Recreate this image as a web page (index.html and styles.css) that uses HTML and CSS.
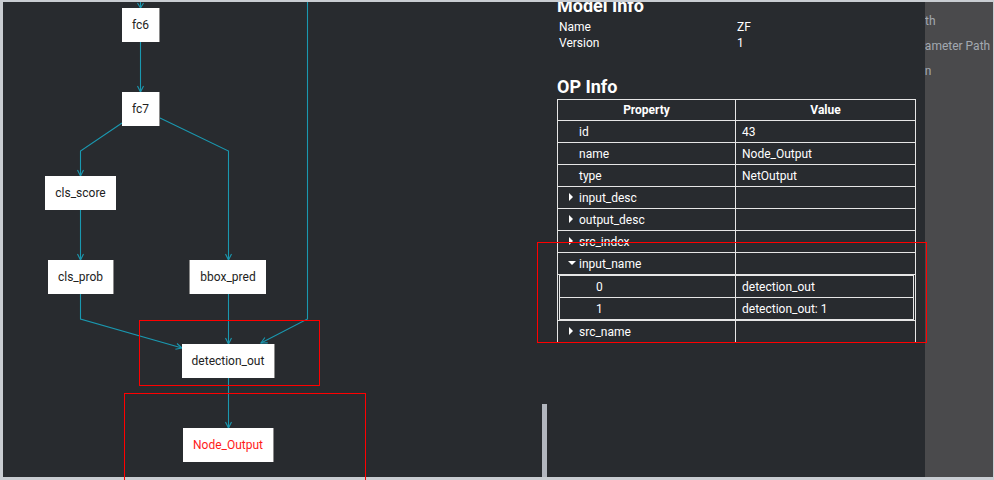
FILE: index.html
```html
<!DOCTYPE html>
<html>
<head>
<meta charset="utf-8">
<link rel="stylesheet" href="styles.css">
</head>
<body>
<div class="app">
  <div class="main">
    <div class="graph">
      <div class="canvas">
        <svg class="edges" width="994" height="480" viewBox="0 0 994 480">
          <g fill="none" stroke="#1a98b0" stroke-width="1.1">
            <path d="M140.5 0 V8"/>
            <path d="M137.5 3 L140.5 8 L143.5 3"/>
            <path d="M140.5 42 V92"/>
            <path d="M137.5 86 L140.5 92 L143.5 86"/>
            <path d="M122 123 L80.5 151 V176"/>
            <path d="M77.5 170 L80.5 176 L83.5 170"/>
            <path d="M160 118 L228.5 151 V260"/>
            <path d="M225.5 254 L228.5 260 L231.5 254"/>
            <path d="M307.5 0 V319 L261 343"/>
            <path d="M267.7 342.9 L261 343 L264.9 337.5"/>
            <path d="M80.5 210 V260"/>
            <path d="M77.5 254 L80.5 260 L83.5 254"/>
            <path d="M80.5 294 V319 L182 348"/>
            <path d="M175.4 349.3 L182 348 L177 343.5"/>
            <path d="M228.5 294 V344"/>
            <path d="M225.5 338 L228.5 344 L231.5 338"/>
            <path d="M228.5 378 V428"/>
            <path d="M225.5 422 L228.5 428 L231.5 422"/>
          </g>
        </svg>
        <div class="node shadow-r" style="left:122px;top:8px;width:37px">fc6</div>
        <div class="node shadow-r" style="left:122px;top:92px;width:37px">fc7</div>
        <div class="node" style="left:45px;top:176px;width:71px">cls_score</div>
        <div class="node shadow-r" style="left:48px;top:260px;width:65px">cls_prob</div>
        <div class="node shadow-l" style="left:190px;top:260px;width:76px">bbox_pred</div>
        <div class="node shadow-r" style="left:182px;top:344px;width:92px">detection_out</div>
        <div class="node node-out shadow-r" style="left:183px;top:428px;width:90px">Node_Output</div>
      </div>
    </div>
    <div class="info">
      <h2 class="heading heading-model">Model Info</h2>
      <div class="kv">
        <div class="kv-row"><span class="kv-key">Name</span><span class="kv-val">ZF</span></div>
        <div class="kv-row"><span class="kv-key">Version</span><span class="kv-val">1</span></div>
      </div>
      <h2 class="heading heading-op">OP Info</h2>
      <table class="op">
        <colgroup><col class="c1"><col class="c2"></colgroup>
        <tr class="head"><th>Property</th><th>Value</th></tr>
        <tr><td class="prop">id</td><td class="val">43</td></tr>
        <tr><td class="prop">name</td><td class="val">Node_Output</td></tr>
        <tr><td class="prop">type</td><td class="val">NetOutput</td></tr>
        <tr><td class="prop"><span class="caret right"></span>input_desc</td><td class="val"></td></tr>
        <tr><td class="prop"><span class="caret right"></span>output_desc</td><td class="val"></td></tr>
        <tr><td class="prop"><span class="caret right"></span>src_index</td><td class="val"></td></tr>
        <tr><td class="prop"><span class="caret down"></span>input_name</td><td class="val"></td></tr>
        <tr><td class="nested" colspan="2">
          <table class="inner">
            <colgroup><col class="ic1"><col class="ic2"></colgroup>
            <tr><td class="idx">0</td><td class="val">detection_out</td></tr>
            <tr><td class="idx">1</td><td class="val">detection_out: 1</td></tr>
          </table>
        </td></tr>
        <tr><td class="prop"><span class="caret right"></span>src_name</td><td class="val"></td></tr>
      </table>
    </div>
    <div class="scrollbar"></div>
  </div>
  <div class="sidebar">
    <div class="side-line s1">Path</div>
    <div class="side-line s2">Parameter Path</div>
    <div class="side-line s3">Version</div>
  </div>
  <div class="mark mark-det"></div>
  <div class="mark mark-out"></div>
  <div class="mark mark-table"></div>
</div>
</body>
</html>
```

FILE: styles.css
```css
html, body {
  margin: 0;
  padding: 0;
}
body {
  width: 994px;
  height: 480px;
  background: #c9cdd2;
  overflow: hidden;
  font-family: Roboto, "Liberation Sans", sans-serif;
  font-size: 12px;
}
.app {
  position: relative;
  display: flex;
  margin: 2px 1px 0 3px;
  height: 475px;
}
.main {
  position: relative;
  display: flex;
  width: 922px;
  flex: none;
  background: #282b2f;
  overflow: hidden;
}
.graph {
  position: relative;
  width: 554px;
  flex: none;
}
.canvas {
  position: absolute;
  left: -3px;
  top: -2px;
  width: 994px;
  height: 480px;
}
.edges {
  position: absolute;
  left: 0;
  top: 0;
}
.node {
  position: absolute;
  height: 34px;
  background: #fff;
  color: #222;
  font-size: 12px;
  line-height: 34px;
  text-align: center;
  white-space: nowrap;
}
.shadow-r { box-shadow: 1px 0 0 #8a8a8a; }
.shadow-l { box-shadow: -1px 0 0 #8a8a8a; }
.node-out { color: #ff1a1a; }

.info {
  width: 358px;
  color: #fff;
}
.heading {
  margin: 0;
  font-size: 18px;
  line-height: 21px;
  font-weight: 700;
}
.heading-model { margin-top: -7px; }
.heading-op { margin-top: 25px; }
.kv { margin-top: 3px; }
.kv-row {
  display: flex;
  line-height: 16px;
}
.kv-key {
  width: 176px;
  padding-left: 2px;
}
.kv-val { padding-left: 2px; }

.op {
  margin-top: 2px;
  width: 359px;
  border-collapse: collapse;
  table-layout: fixed;
  color: #fff;
  font-size: 12px;
}
.c1 { width: 178px; }
.c2 { width: 180px; }
.op th, .op td {
  border: 1px solid #e6e6e6;
  padding: 0;
  height: 21px;
  font-weight: 400;
  white-space: nowrap;
}
.op .head th {
  height: 20px;
  font-weight: 700;
  text-align: center;
}
.prop { padding-left: 21px !important; }
.val { padding-left: 6px !important; }
.caret {
  display: inline-block;
  width: 0;
  height: 0;
  margin-left: -10px;
  vertical-align: middle;
}
.caret.right {
  border-top: 4px solid transparent;
  border-bottom: 4px solid transparent;
  border-left: 4px solid #fff;
  margin-right: 6px;
  margin-top: -2px;
}
.caret.down {
  border-left: 4px solid transparent;
  border-right: 4px solid transparent;
  border-top: 4px solid #fff;
  margin-left: -11px;
  margin-right: 3px;
  margin-top: -2px;
}
.op td.nested {
  padding: 0 1px !important;
  height: auto;
}
.inner {
  width: 100%;
  border-collapse: collapse;
  table-layout: fixed;
}
.ic1 { width: 176px; }
.inner td {
  border: 1px solid #e6e6e6;
  height: 21px;
  padding: 0;
}
.inner td.idx { padding-left: 36px; }

.scrollbar {
  position: absolute;
  left: 539px;
  top: 402px;
  width: 5px;
  height: 80px;
  background: #b2b6be;
}

.sidebar {
  width: 68px;
  flex: none;
  background: #4a4a4c;
  overflow: hidden;
  padding-top: 7px;
  box-sizing: border-box;
  color: #a3a9b1;
}
.side-line {
  line-height: 25px;
  white-space: nowrap;
}
.s1 { margin-left: -14px; }
.s2 { margin-left: -18px; }
.s3 { margin-left: -34px; }

.mark {
  position: absolute;
  box-sizing: border-box;
  border: 1px solid #ff0000;
}
.mark-det { left: 136px; top: 318px; width: 181px; height: 66px; }
.mark-out { left: 121px; top: 391px; width: 242px; height: 100px; }
.mark-table { left: 534px; top: 240px; width: 390px; height: 101px; }
```
